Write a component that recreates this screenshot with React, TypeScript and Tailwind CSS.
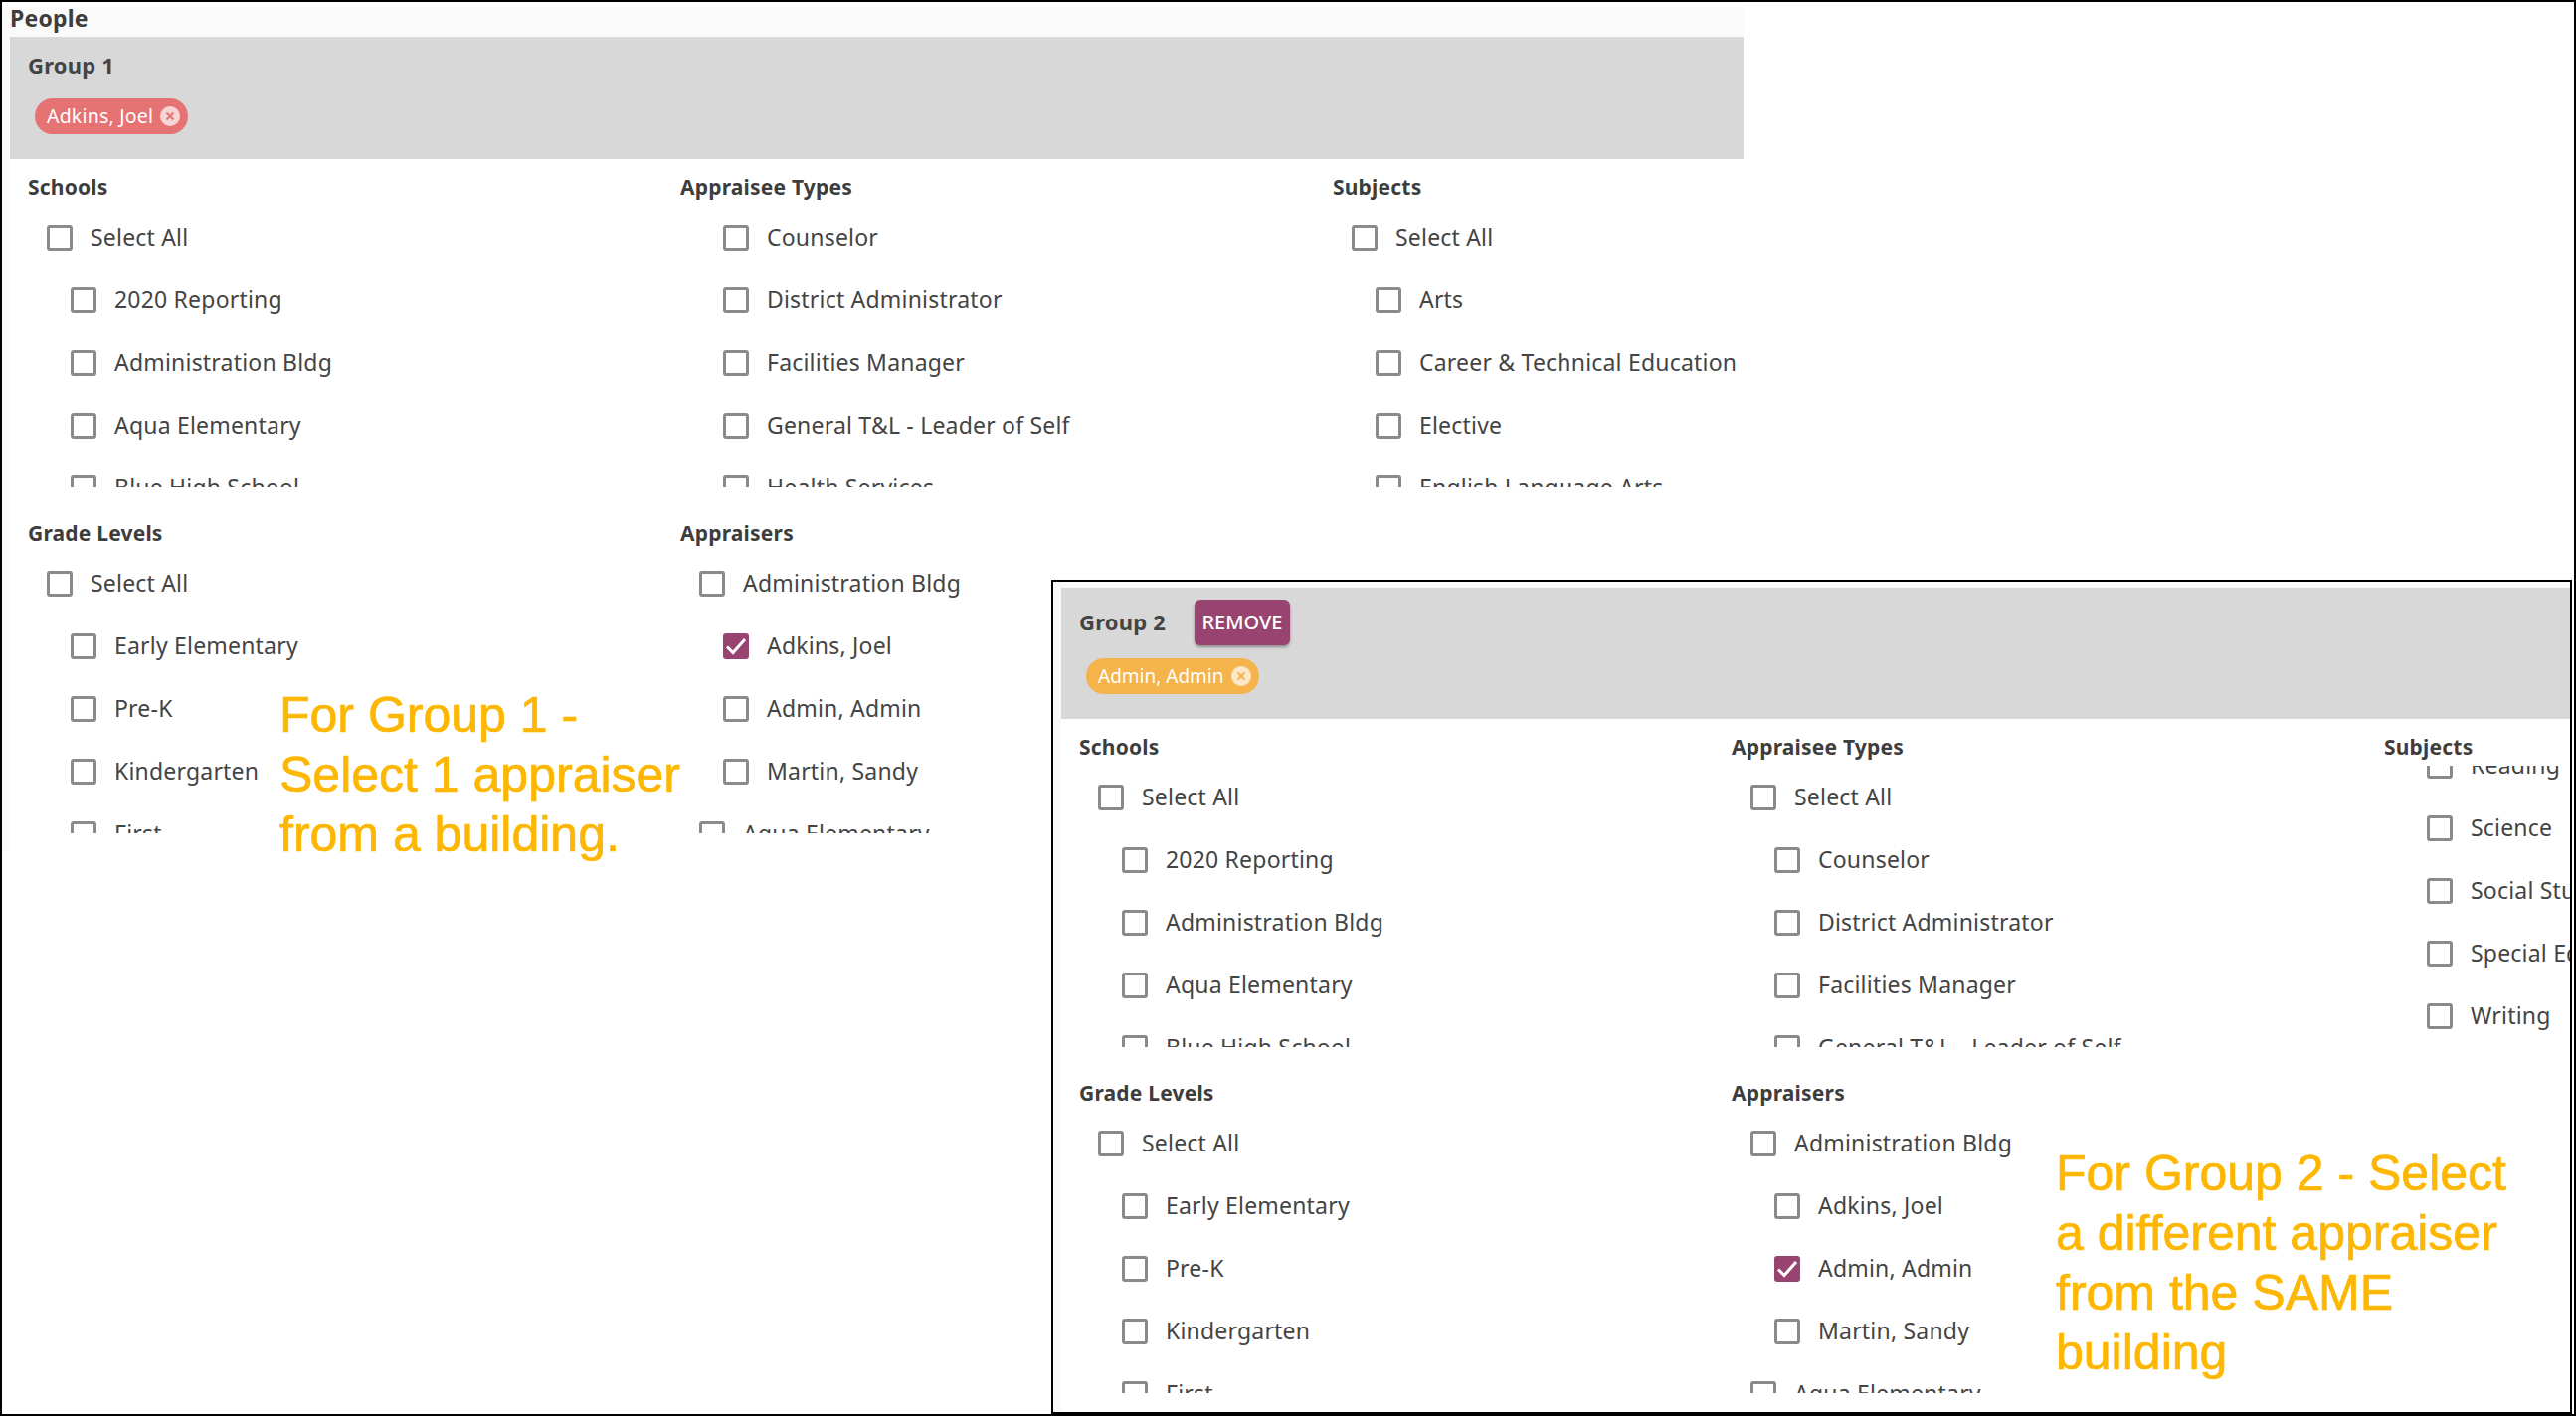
import React, { FC, ReactElement } from 'react';

type Item = { label: string; indent?: boolean; checked?: boolean };

const schools: Item[] = [
	{ label: 'Select All' },
	{ label: '2020 Reporting', indent: true },
	{ label: 'Administration Bldg', indent: true },
	{ label: 'Aqua Elementary', indent: true },
	{ label: 'Blue High School', indent: true },
];

const types: Item[] = [
	{ label: 'Counselor', indent: true },
	{ label: 'District Administrator', indent: true },
	{ label: 'Facilities Manager', indent: true },
	{ label: 'General T&L - Leader of Self', indent: true },
	{ label: 'Health Services', indent: true },
];

const subjects: Item[] = [
	{ label: 'Select All' },
	{ label: 'Arts', indent: true },
	{ label: 'Career & Technical Education', indent: true },
	{ label: 'Elective', indent: true },
	{ label: 'English Language Arts', indent: true },
];

const subjectsScrolled: Item[] = [
	{ label: 'Reading', indent: true },
	{ label: 'Science', indent: true },
	{ label: 'Social Studies', indent: true },
	{ label: 'Special Education', indent: true },
	{ label: 'Writing', indent: true },
];

const grades: Item[] = [
	{ label: 'Select All' },
	{ label: 'Early Elementary', indent: true },
	{ label: 'Pre-K', indent: true },
	{ label: 'Kindergarten', indent: true },
	{ label: 'First', indent: true },
];

const appraisers = (selected: string): Item[] => [
	{ label: 'Administration Bldg' },
	{ label: 'Adkins, Joel', indent: true, checked: selected === 'Adkins, Joel' },
	{ label: 'Admin, Admin', indent: true, checked: selected === 'Admin, Admin' },
	{ label: 'Martin, Sandy', indent: true },
	{ label: 'Aqua Elementary' },
];

const CheckRow: FC<{ item: Item }> = ({ item }): ReactElement => (
	<div className={`flex h-[63px] shrink-0 items-center gap-[18px] whitespace-nowrap ${item.indent ? 'pl-[43px]' : 'pl-[19px]'}`}>
		{item.checked ? (
			<span className="flex size-[26px] shrink-0 items-center justify-center rounded-[3px] bg-[#994370]">
				<svg viewBox="0 0 26 26" className="size-[26px]" fill="none" stroke="#fff" strokeWidth="3">
					<path d="M4 13.5l6 6L22 6" />
				</svg>
			</span>
		) : (
			<span className="size-[26px] shrink-0 rounded-[3px] border-[3px] border-[#8a8a8a]" />
		)}
		<span>{item.label}</span>
	</div>
);

const CheckList: FC<{ title: string; items: Item[]; scrolled?: boolean }> = ({ title, items, scrolled }): ReactElement => (
	<div>
		<h3 className="flex h-[35px] items-center pb-[2px] text-[21px] font-bold text-[#3d3d3d]">{title}</h3>
		<div className={`flex h-[283px] flex-col overflow-hidden ${scrolled ? 'justify-end' : ''}`}>
			{items.map(item => (
				<CheckRow key={item.label} item={item} />
			))}
		</div>
	</div>
);

const Chip: FC<{ label: string; className: string; iconColor: string }> = ({ label, className, iconColor }): ReactElement => (
	<span className={`inline-flex h-[36px] items-center gap-[7px] rounded-full pl-[12px] pr-[8px] text-white ${className}`}>
		{label}
		<svg viewBox="0 0 20 20" className="size-[20px]">
			<circle cx="10" cy="10" r="10" fill="#fff" fillOpacity="0.7" />
			<path d="M6.5 6.5l7 7M13.5 6.5l-7 7" stroke={iconColor} strokeWidth="2" />
		</svg>
	</span>
);

const GroupForm: FC<{ selected: string; scrolledSubjects?: boolean }> = ({ selected, scrolledSubjects }): ReactElement => (
	<div className="grid w-[1743px] grid-cols-[656px_656px_431px] gap-y-[30px] bg-white pb-[19px] pl-[18px] pt-[12px]">
		<CheckList title="Schools" items={schools} />
		<CheckList title="Appraisee Types" items={scrolledSubjects ? [{ label: 'Select All' }, ...types.slice(0, 4)] : types} />
		<CheckList title="Subjects" items={scrolledSubjects ? subjectsScrolled : subjects} scrolled={scrolledSubjects} />
		<CheckList title="Grade Levels" items={grades} />
		<CheckList title="Appraisers" items={appraisers(selected)} />
	</div>
);

const App: FC = (): ReactElement => {
	return (
		<div className="relative h-[1424px] w-[2590px] overflow-hidden border-2 border-black bg-white font-['Noto_Sans','Liberation_Sans',sans-serif] text-[23px] tracking-[0.2px] text-[#444]">
			<section className="mt-[5px] w-[1751px] bg-[#fafafa] pl-[8px]">
				<h2 className="flex h-[30px] items-center pb-[7px] text-[23px] font-bold text-[#3d3d3d]">People</h2>
				<div className="h-[123px] bg-[#d8d8d8] pl-[18px] pt-[15px]">
					<h3 className="flex h-[26px] items-center text-[22px] font-bold text-[#444]">Group 1</h3>
					<div className="mt-[20px] pl-[7px]">
						<Chip label="Adkins, Joel" className="bg-[#e57373] text-[19.5px]" iconColor="#e57373" />
					</div>
				</div>
				<GroupForm selected="Adkins, Joel" />
			</section>

			<p className="absolute left-[279px] top-[687px] font-['Liberation_Sans',sans-serif] text-[50px] leading-[60px] tracking-normal text-[#fdb702] [-webkit-text-stroke:0.7px_#fdb702]">
				For Group 1 -<br />
				Select 1 appraiser<br />
				from a building.
			</p>

			<section className="absolute left-[1055px] top-[581px] h-[839px] w-[1529px] overflow-hidden border-2 border-black bg-[#fafafa] pl-[8px] pt-[6px]">
				<div className="h-[132px] bg-[#d8d8d8] pl-[18px] pt-[12px]">
					<div className="flex h-[46px] items-center gap-[29px]">
						<h3 className="pb-[2px] text-[22px] font-bold text-[#444]">Group 2</h3>
						<button className="h-[46px] w-[96px] rounded-[6px] bg-[#994370] text-[20px] font-medium tracking-normal text-white shadow-[0_2px_3px_rgba(0,0,0,0.35)]">REMOVE</button>
					</div>
					<div className="mt-[12px] pl-[7px]">
						<Chip label="Admin, Admin" className="bg-[#f5b34c] text-[19px] tracking-normal" iconColor="#f5b34c" />
					</div>
				</div>
				<GroupForm selected="Admin, Admin" scrolledSubjects />
			</section>

			<p className="absolute left-[2065px] top-[1148px] font-['Liberation_Sans',sans-serif] text-[50px] leading-[60px] tracking-normal text-[#fdb702] [-webkit-text-stroke:0.7px_#fdb702]">
				For Group 2 - Select<br />
				a different appraiser<br />
				from the SAME<br />
				building
			</p>
		</div>
	);
};
export default App;
